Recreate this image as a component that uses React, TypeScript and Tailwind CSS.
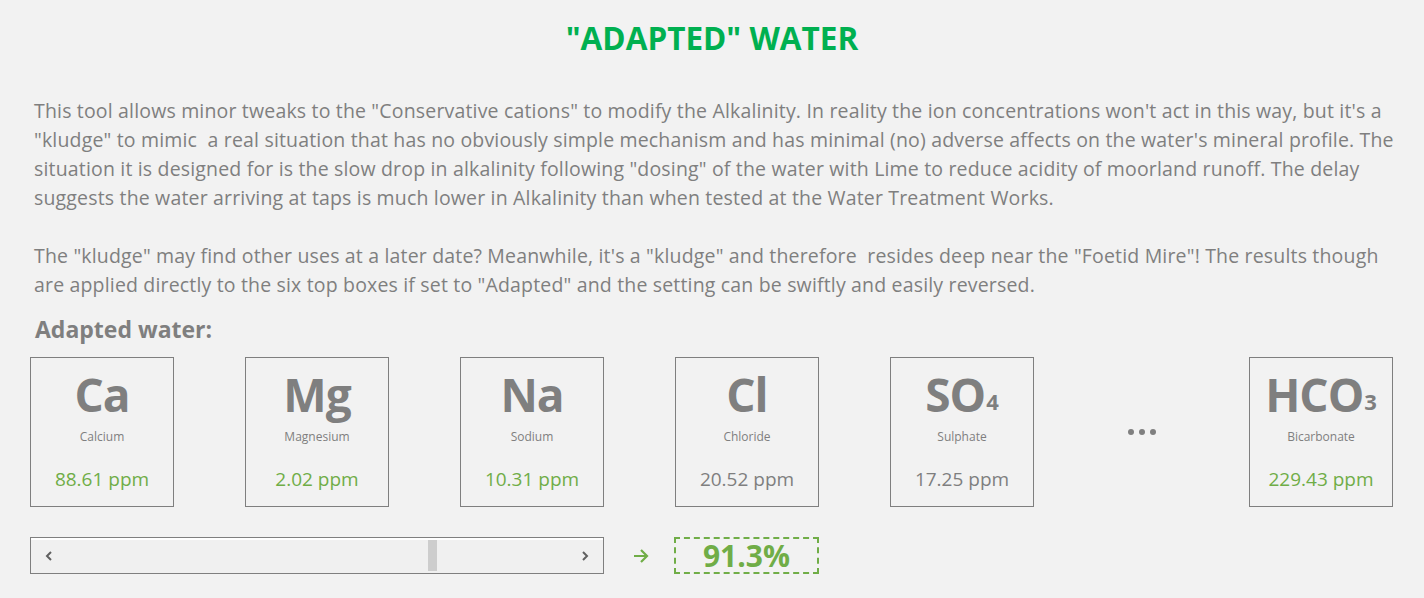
const ions = [
  { sym: "Ca", sub: "", name: "Calcium", value: "88.61 ppm", adjusted: true },
  { sym: "Mg", sub: "", name: "Magnesium", value: "2.02 ppm", adjusted: true },
  { sym: "Na", sub: "", name: "Sodium", value: "10.31 ppm", adjusted: true },
  { sym: "Cl", sub: "", name: "Chloride", value: "20.52 ppm", adjusted: false },
  { sym: "SO", sub: "4", name: "Sulphate", value: "17.25 ppm", adjusted: false },
];

const hco3 = { sym: "HCO", sub: "3", name: "Bicarbonate", value: "229.43 ppm", adjusted: true };

type Ion = (typeof ions)[number];

const intro = [
  `This tool allows minor tweaks to the "Conservative cations" to modify the Alkalinity. In reality the ion concentrations won't act in this way, but it's a`,
  `"kludge" to mimic\u00a0 a real situation that has no obviously simple mechanism and has minimal (no) adverse affects on the water's mineral profile. The`,
  `situation it is designed for is the slow drop in alkalinity following "dosing" of the water with Lime to reduce acidity of moorland runoff. The delay`,
  `suggests the water arriving at taps is much lower in Alkalinity than when tested at the Water Treatment Works.`,
];

const note = [
  `The "kludge" may find other uses at a later date? Meanwhile, it's a "kludge" and therefore\u00a0 resides deep near the "Foetid Mire"! The results though`,
  `are applied directly to the six top boxes if set to "Adapted" and the setting can be swiftly and easily reversed.`,
];

const IonBox = ({ ion }: { ion: Ion }) => (
  <div className="w-[144px] h-[150px] shrink-0 border border-[#7f7f7f] flex flex-col items-center">
    <div className="mt-[14px] h-[44px] flex items-end leading-none font-bold text-[#7f7f7f] text-[46px] tracking-[-1px]">
      <span className="leading-[44px]">{ion.sym}</span>
      {ion.sub && <span className="text-[22px] leading-none mb-[4px] ml-[1px] tracking-normal">{ion.sub}</span>}
    </div>
    <div className="mt-[14px] h-[14px] text-[12px] leading-[14px] text-[#7f7f7f]">{ion.name}</div>
    <div
      className={
        "mt-[25px] h-[20px] text-[19px] leading-[20px] " + (ion.adjusted ? "text-[#70ad47]" : "text-[#7f7f7f]")
      }
    >
      {ion.value}
    </div>
  </div>
);

export default function App() {
  return (
    <div className="w-[1424px] h-[598px] bg-[#f2f2f2] overflow-hidden font-['Open_Sans',sans-serif] text-[#7f7f7f]">
      <h1 className="pt-[19px] text-center text-[31.5px] leading-[38px] font-bold text-[#00b050]">
        "ADAPTED" WATER
      </h1>

      <div className="mt-[39px] pl-[34px] text-[19.5px] tracking-[0.17px] leading-[29px] whitespace-nowrap">
        {intro.map((line) => (
          <div key={line}>{line}</div>
        ))}
        <div className="h-[29px]" />
        {note.map((line) => (
          <div key={line}>{line}</div>
        ))}
      </div>

      <div className="mt-[15px] pl-[35px] text-[23px] leading-[30px] font-bold">Adapted water:</div>

      <div className="mt-[13px] pl-[30px] flex items-start">
        <div className="flex gap-[71px]">
          {ions.map((ion) => (
            <IonBox key={ion.sym} ion={ion} />
          ))}
        </div>
        <div className="w-[215px] h-[150px] flex items-center justify-center gap-[5px]">
          <span className="w-[6px] h-[6px] rounded-full bg-[#7f7f7f]" />
          <span className="w-[6px] h-[6px] rounded-full bg-[#7f7f7f]" />
          <span className="w-[6px] h-[6px] rounded-full bg-[#7f7f7f]" />
        </div>
        <IonBox ion={hco3} />
      </div>

      <div className="mt-[30px] pl-[30px] flex items-center">
        <div className="w-[574px] h-[37px] border border-[#7f7f7f] bg-[#f0f0f0] flex items-center relative">
          <div className="absolute inset-x-0 top-0 h-[2px] bg-white" />
          <svg className="ml-[13px]" width="10" height="12" viewBox="0 0 10 12">
            <path d="M7 2 L3 6 L7 10" fill="none" stroke="#606060" strokeWidth="2" />
          </svg>
          <div className="flex-1" />
          <svg className="mr-[13px]" width="10" height="12" viewBox="0 0 10 12">
            <path d="M3 2 L7 6 L3 10" fill="none" stroke="#606060" strokeWidth="2" />
          </svg>
          {/* slider thumb */}
          <div className="absolute left-[397px] top-[2px] w-[9px] h-[31px] bg-[#cdcdcd]" />
        </div>
        <svg className="ml-[28px]" width="18" height="16" viewBox="0 0 18 16">
          <path d="M2 8 H15 M9 2 L15 8 L9 14" fill="none" stroke="#70ad47" strokeWidth="2.2" />
        </svg>
        <div className="ml-[24px] w-[145px] h-[37px] border-2 border-dashed border-[#70ad47] flex items-center justify-center text-[30px] font-bold text-[#70ad47] leading-none">
          91.3%
        </div>
      </div>
    </div>
  );
}
